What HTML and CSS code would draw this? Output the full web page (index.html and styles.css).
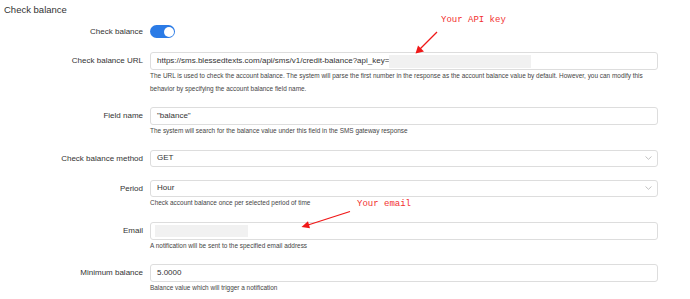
FILE: index.html
```html
<!DOCTYPE html>
<html>
<head>
<meta charset="utf-8">
<link rel="stylesheet" href="styles.css">
</head>
<body>
<div class="page">
  <h2 class="title">Check balance</h2>
  <div class="row row-toggle">
    <label class="label">Check balance</label>
    <div class="control"><span class="toggle"><span class="knob"></span></span></div>
  </div>
  <div class="row">
    <label class="label">Check balance URL</label>
    <div class="control">
      <div class="input">https://sms.blessedtexts.com/api/sms/v1/credit-balance?api_key=<span class="redact redact-key"></span></div>
      <div class="help">The URL is used to check the account balance. The system will parse the first number in the response as the account balance value by default. However, you can modify this behavior by specifying the account balance field name.</div>
    </div>
  </div>
  <div class="row">
    <label class="label">Field name</label>
    <div class="control">
      <div class="input">"balance"</div>
      <div class="help">The system will search for the balance value under this field in the SMS gateway response</div>
    </div>
  </div>
  <div class="row">
    <label class="label">Check balance method</label>
    <div class="control">
      <div class="input select">GET<svg class="chev" width="7" height="4" viewBox="0 0 7 4"><path d="M0.5 0.5 L3.5 3.3 L6.5 0.5" fill="none" stroke="#bbb" stroke-width="0.9"/></svg></div>
    </div>
  </div>
  <div class="row">
    <label class="label">Period</label>
    <div class="control">
      <div class="input select">Hour<svg class="chev" width="7" height="4" viewBox="0 0 7 4"><path d="M0.5 0.5 L3.5 3.3 L6.5 0.5" fill="none" stroke="#bbb" stroke-width="0.9"/></svg></div>
      <div class="help">Check account balance once per selected period of time</div>
    </div>
  </div>
  <div class="row">
    <label class="label">Email</label>
    <div class="control">
      <div class="input input-email"><span class="redact redact-email"></span></div>
      <div class="help">A notification will be sent to the specified email address</div>
    </div>
  </div>
  <div class="row">
    <label class="label">Minimum balance</label>
    <div class="control">
      <div class="input">5.0000</div>
      <div class="help">Balance value which will trigger a notification</div>
    </div>
  </div>

  <div class="note note-key">Your API key</div>
  <div class="note note-email">Your email</div>
  <svg class="arrows" width="690" height="299" viewBox="0 0 690 299">
    <g stroke="#f01818" stroke-width="1.3" fill="#f01818">
      <line x1="437" y1="32" x2="420" y2="49"/>
      <polygon points="415.5,53.5 418,45.5 424,51.5" stroke="none"/>
      <line x1="350" y1="211.5" x2="308" y2="225"/>
      <polygon points="301.5,227 308,221.3 310,228.3" stroke="none"/>
    </g>
  </svg>
</div>
</body>
</html>
```
FILE: styles.css
```css
* { box-sizing: border-box; }
html, body { margin: 0; padding: 0; background: #fff; }
body { font-family: "Liberation Sans", Arial, sans-serif; color: #333; }
.page { position: relative; width: 690px; height: 299px; padding: 3px 0 0 4px; overflow: hidden; }
.title { margin: 0 0 8px 0; font-size: 9.5px; font-weight: normal; line-height: 14px; color: #333; }
.row { display: grid; grid-template-columns: 139px 508px; column-gap: 7px; align-items: start; margin-bottom: 12px; }
.row-toggle { margin-bottom: 14px; }
.label { text-align: right; font-size: 8px; line-height: 18px; color: #333; }
.row-toggle .label { line-height: 13px; }
.control { display: flex; flex-direction: column; }
.toggle { display: block; width: 25px; height: 13px; border-radius: 7px; background: #2b7be6; position: relative; }
.knob { position: absolute; right: 1.5px; top: 1.5px; width: 10px; height: 10px; border-radius: 50%; background: #fff; }
.input { height: 18px; border: 1px solid #ddd; border-radius: 3px; padding: 0 6px; font-size: 8px; line-height: 16px; color: #333; display: flex; align-items: center; white-space: nowrap; overflow: hidden; }
.select { height: 17.5px; justify-content: space-between; }
.chev { margin-right: -1px; }
.input-email { padding-left: 4px; }
.redact { display: inline-block; background: #f1f1f1; }
.redact-key { width: 142px; height: 13px; }
.redact-email { width: 93px; height: 12px; }
.help { font-size: 6.45px; line-height: 12.5px; height: auto; color: #444; }
.note { position: absolute; font-family: "Liberation Mono", "DejaVu Sans Mono", monospace; font-size: 9px; line-height: 10px; color: #f23030; }
.note-key { left: 441px; top: 15px; }
.note-email { left: 357px; top: 199px; }
.arrows { position: absolute; left: 0; top: 0; pointer-events: none; }
```
